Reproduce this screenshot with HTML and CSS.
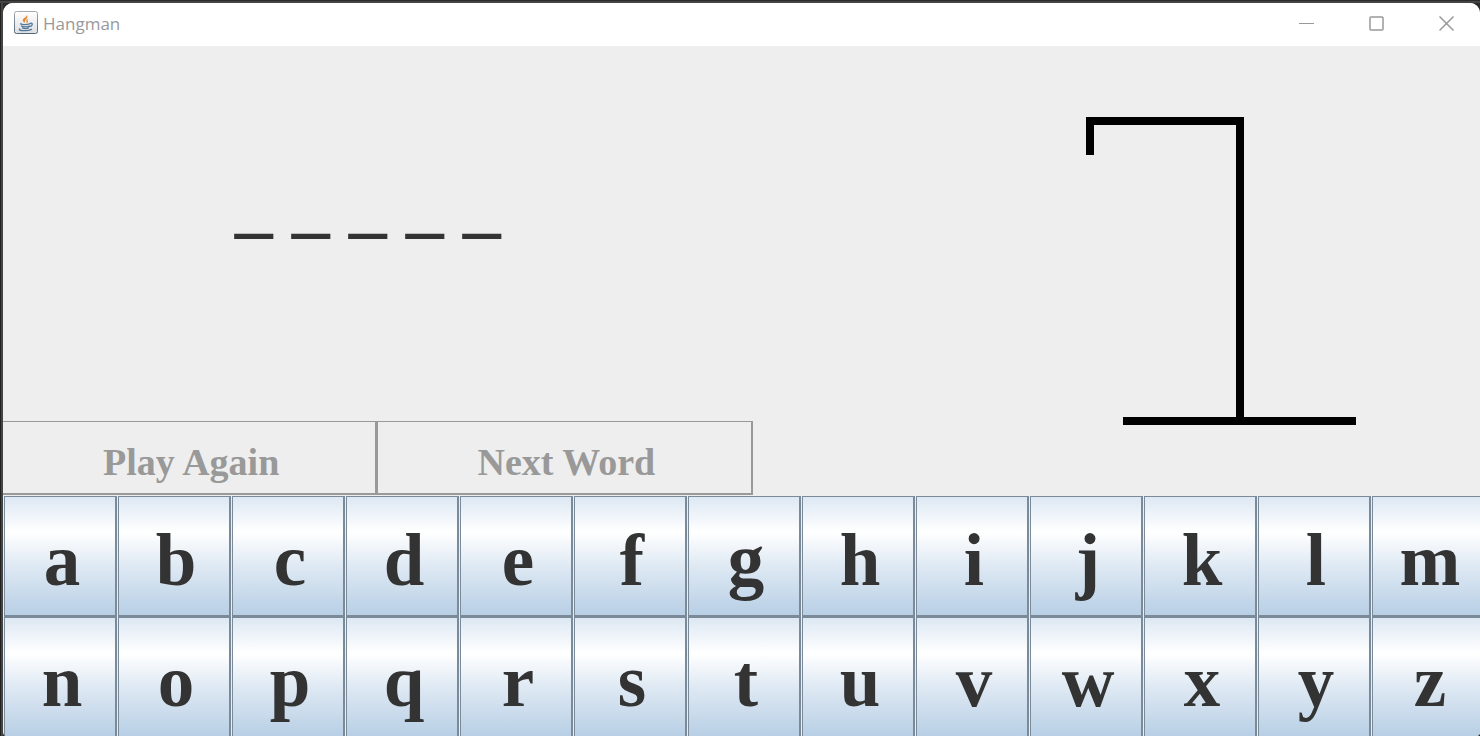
FILE: index.html
```html
<!DOCTYPE html>
<html lang="en">
<head>
<meta charset="utf-8">
<title>Hangman</title>
<link rel="stylesheet" href="styles.css">
</head>
<body>
<div class="window">
  <header class="titlebar">
    <svg class="app-icon" viewBox="0 0 24 24" aria-hidden="true">
      <defs>
        <linearGradient id="tile" x1="0" y1="0" x2="0" y2="1"><stop offset="0" stop-color="#fff"/><stop offset="1" stop-color="#dcdfe2"/></linearGradient>
        <linearGradient id="rim" x1="0" y1="0" x2="0" y2="1"><stop offset="0" stop-color="#a3abb3"/><stop offset="1" stop-color="#526575"/></linearGradient>
      </defs>
      <rect x=".5" y=".5" width="23" height="22" rx="2" fill="url(#tile)" stroke="url(#rim)"/>
      <path d="M12.600 3.800c1 2-3.800 3.200-3.800 5.400 0 1.400 1.500 2 2.400 3-.3-1.500-.8-2.200.4-3.500C13 7.200 14.200 6 12.600 3.800zM14.700 7.200c-2.200.8-3.200 1.900-2.200 3.300.6.8.2 1.400-.4 2 2.200-.8 2.300-2 1.500-2.900-.5-.8.1-1.600 1.100-2.400z" fill="#e8832c"/>
      <g fill="none" stroke="#557a99" stroke-width="1.300" stroke-linecap="round">
        <path d="M7 12.500c-2 1.200 6.500 1.500 9 .1M7.500 15c1.200 1.200 6 1.100 8 .1M8.500 17c1.200.8 4.500.8 6 0M16.200 12.300c3-.8 2.600 2.600-.3 3.200M5.800 18c-3 1.700 8 2.500 11.700.4"/>
      </g>
    </svg>
    <h1 class="title">Hangman</h1>
    <div class="controls">
      <button class="control" type="button" aria-label="Minimize"><svg viewBox="0 0 16 16"><path d="M0 7.500h15"/></svg></button>
      <button class="control" type="button" aria-label="Maximize"><svg class="strong" viewBox="0 0 16 16"><rect x="1" y="1" width="13" height="13" rx="1"/></svg></button>
      <button class="control" type="button" aria-label="Close"><svg class="strong" viewBox="0 0 16 16"><path d="M.5.500l14 14M14.500.500l-14 14"/></svg></button>
    </div>
  </header>
  <main class="game">
    <section class="play">
      <p class="word">_ _ _ _ _</p>
      <div class="actions">
        <button class="action" type="button" disabled>Play Again</button>
        <button class="action" type="button" disabled>Next Word</button>
      </div>
    </section>
    <section class="drawing">
      <svg class="gallows" viewBox="0 0 270 308" role="img" aria-label="Gallows"><path d="M4 38V4h150v300M37 304h233" fill="none" stroke="#000" stroke-width="8"/></svg>
    </section>
  </main>
  <div class="keyboard">
    <button class="key" type="button">a</button>
    <button class="key" type="button">b</button>
    <button class="key" type="button">c</button>
    <button class="key" type="button">d</button>
    <button class="key" type="button">e</button>
    <button class="key" type="button">f</button>
    <button class="key" type="button">g</button>
    <button class="key" type="button">h</button>
    <button class="key" type="button">i</button>
    <button class="key" type="button">j</button>
    <button class="key" type="button">k</button>
    <button class="key" type="button">l</button>
    <button class="key" type="button">m</button>
    <button class="key" type="button">n</button>
    <button class="key" type="button">o</button>
    <button class="key" type="button">p</button>
    <button class="key" type="button">q</button>
    <button class="key" type="button">r</button>
    <button class="key" type="button">s</button>
    <button class="key" type="button">t</button>
    <button class="key" type="button">u</button>
    <button class="key" type="button">v</button>
    <button class="key" type="button">w</button>
    <button class="key" type="button">x</button>
    <button class="key" type="button">y</button>
    <button class="key" type="button">z</button>
  </div>
</div>
</body>
</html>
```
FILE: styles.css
```css
* { box-sizing: border-box; }

body {
  margin: 0;
  height: 100vh;
  padding: 3px 0 0 3px;
  overflow: hidden;
  background: linear-gradient(#2b2b2b 1px, #444 1px, #444 3px, transparent 3px), linear-gradient(90deg, #222 1px, #444 1px, #444 3px, #2b2b2b 3px);
  font-family: "Liberation Serif", "Times New Roman", serif;
}

button { font: inherit; margin: 0; }

.window {
  display: flex;
  flex-direction: column;
  height: 100%;
  overflow: hidden;
  border-radius: 10px 10px 4px 4px;
  background: #eee;
}

.titlebar {
  display: flex;
  flex: none;
  align-items: center;
  height: 43px;
  padding-left: 11px;
  background: #fff;
}

.app-icon { width: 24px; height: 24px; margin-bottom: 4px; }

.title {
  margin: 0 auto 0 5px;
  padding-bottom: 1px;
  font: 400 17px/24px "Open Sans", "Noto Sans", sans-serif;
  color: #999;
}

.controls { display: flex; height: 100%; }

.control {
  display: grid;
  place-items: center;
  width: 70px;
  padding: 0 0 1px 4px;
  border: 0;
  background: none;
}

.control svg { width: 16px; height: 16px; fill: none; stroke: #999; stroke-width: 1; }

.control .strong { stroke-width: 1.5; }

.game { display: flex; flex: 1; min-height: 0; }

.play { display: flex; flex: none; flex-direction: column; width: calc(50% + 11px); }

.word {
  display: grid;
  flex: 1;
  place-items: center;
  margin: 0;
  padding: 0 20px 64px 0;
  font-size: 76px;
  font-weight: 700;
  line-height: 84px;
  color: #333;
}

.actions { display: grid; grid-template-columns: 1fr 1fr; margin-left: -1px; }

.action {
  height: 74px;
  padding: 8px 0 0 4px;
  border: solid #999;
  border-width: 1px 2px 2px 1px;
  background: none;
  font-size: 38px;
  font-weight: 700;
  color: #999;
}

.drawing { display: flex; flex: 1; align-items: flex-end; justify-content: flex-end; padding: 0 124px 70px 0; }

.gallows { width: 270px; }

.keyboard {
  display: grid;
  flex: none;
  grid-template-columns: repeat(13, minmax(0, 1fr));
  column-gap: 1px;
  margin: 1px -5px -2px 1px;
}

.key {
  height: 121px;
  padding: 10px 0 0 4px;
  border: solid #7a8a99;
  border-width: 1px 2px 2px 1px;
  background: linear-gradient(#dde8f3, #fff 30%, #dde8f3 60%, #b8cfe5);
  font-size: 73px;
  font-weight: 700;
  line-height: 84px;
  color: #333;
}
```
